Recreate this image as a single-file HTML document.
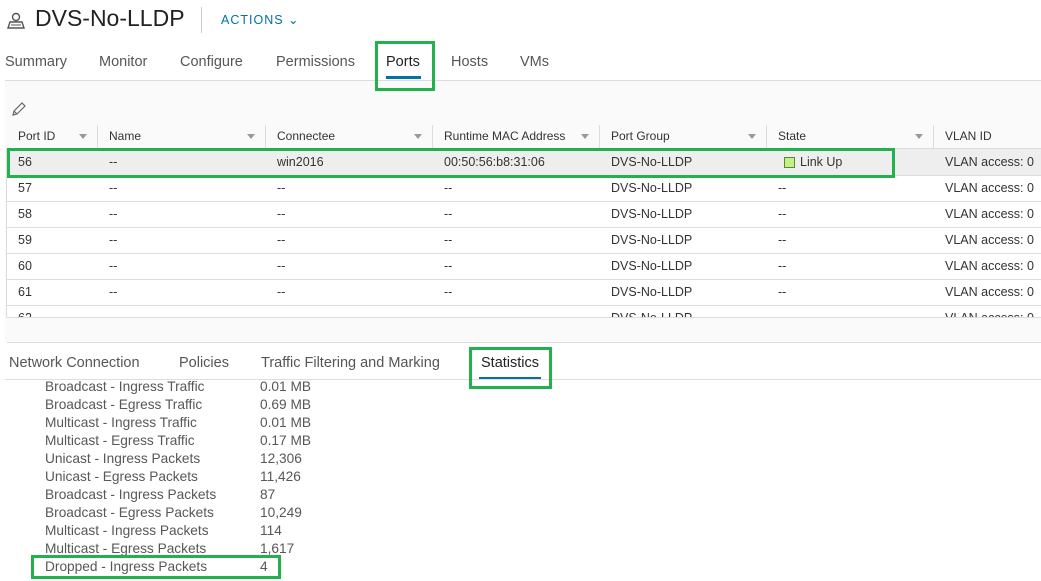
<!DOCTYPE html>
<html><head><style>
*{margin:0;padding:0;box-sizing:border-box}
body{width:1041px;height:581px;overflow:hidden;background:#fff;font-family:"Liberation Sans",sans-serif;position:relative;color:#333}
.a{position:absolute;white-space:nowrap}
.tab{font-size:14.5px;color:#565656;top:54px}
.hd{font-size:12px;color:#333;top:129px}
.cell{font-size:12.5px;color:#333}
.g{position:absolute;border:3px solid #22b14c}
.st{font-size:13.7px;color:#575757}
.fl{position:absolute;width:0;height:0;border-left:4px solid transparent;border-right:4px solid transparent;border-top:5px solid #999}
</style></head><body>
<svg class="a" style="left:6px;top:12px" width="20" height="18" viewBox="0 0 20 18"><circle cx="10" cy="5" r="3.5" fill="none" stroke="#555" stroke-width="1.4"/><path d="M2 16 L4 10 H16 L18 16 Z" fill="none" stroke="#555" stroke-width="1.4"/><path d="M5 13h10" stroke="#555"/></svg>
<div class="a" style="left:35px;top:5px;font-size:23px;color:#222">DVS-No-LLDP</div>
<div class="a" style="left:201px;top:7px;width:1px;height:26px;background:#ccc"></div>
<div class="a" style="left:221px;top:12px;font-size:12.5px;color:#0072a3;letter-spacing:1px">ACTIONS ⌄</div>
<div class="a tab" style="left:5px">Summary</div>
<div class="a tab" style="left:99px">Monitor</div>
<div class="a tab" style="left:180px">Configure</div>
<div class="a tab" style="left:276px">Permissions</div>
<div class="a tab" style="left:386px;color:#222">Ports</div>
<div class="a" style="left:386px;top:76px;width:35px;height:3px;background:#0072a3"></div>
<div class="a tab" style="left:451px">Hosts</div>
<div class="a tab" style="left:520px">VMs</div>
<div class="a" style="left:5px;top:80px;width:1036px;height:1px;background:#ddd"></div>
<div class="a" style="left:5px;top:81px;width:1036px;height:261px;background:#fafafa"></div>
<svg class="a" style="left:11px;top:101px" width="16" height="16" viewBox="0 0 16 16"><path d="M2 14 L3 10 L11 2 L14 5 L6 13 Z M3 10 L6 13" fill="none" stroke="#666" stroke-width="1.2"/></svg>
<div class="a" style="left:6px;top:124px;width:1035px;height:194px;background:#fff;border:1px solid #ddd;border-right:none"></div>
<div class="a" style="left:6px;top:124px;width:1035px;height:25px;background:#fafafa;border-bottom:1px solid #ddd"></div>
<div class="a" style="left:7px;top:149px;width:1034px;height:26px;background:#eee"></div>
<div id="t"></div>
<div class="a" style="left:7px;top:342px;width:1034px;height:1px;background:#ddd"></div>
<div class="a tab" style="left:9px;top:355px">Network Connection</div>
<div class="a tab" style="left:179px;top:355px">Policies</div>
<div class="a tab" style="left:261px;top:355px">Traffic Filtering and Marking</div>
<div class="a tab" style="left:481px;top:355px;color:#222">Statistics</div>
<div class="a" style="left:479px;top:377px;width:62px;height:2px;background:#0072a3"></div>
<div class="a" style="left:5px;top:379px;width:1036px;height:1px;background:#ddd"></div>
<div id="s"></div>
<div class="g" style="left:375px;top:41px;width:60px;height:50px"></div>
<div class="g" style="left:7px;top:148px;width:888px;height:30px"></div>
<div class="g" style="left:469px;top:347px;width:83px;height:42px"></div>
<div class="g" style="left:31px;top:555px;width:250px;height:24px"></div>
<script>
var cols=[6,97,265,432,599,766,933],names=["Port ID","Name","Connectee","Runtime MAC Address","Port Group","State","VLAN ID"],h="";
cols.forEach(function(x,i){h+='<div class="a hd" style="left:'+(x+12)+'px">'+names[i]+'</div>';if(i>0)h+='<div class="a" style="left:'+x+'px;top:125px;width:1px;height:23px;background:#ddd"></div>';if(i<6)h+='<div class="fl" style="left:'+(cols[i+1]-18)+'px;top:134px"></div>';});
var ids=[56,57,58,59,60,61,62];
ids.forEach(function(id,r){var y=149+r*26,ty=y+6;var c=r==0?["56","--","win2016","00:50:56:b8:31:06","DVS-No-LLDP","","VLAN access: 0"]:[id,"--","--","--","DVS-No-LLDP","--","VLAN access: 0"];
c.forEach(function(v,i){h+='<div class="a cell" style="left:'+(cols[i]+12)+'px;top:'+ty+'px">'+v+'</div>';});
if(r==0)h+='<div class="a" style="left:784px;top:157px;width:11px;height:11px;background:#c4f08c;border:1px solid #5a8a2a"></div><div class="a cell" style="left:800px;top:155px">Link Up</div>';
if(r<6)h+='<div class="a" style="left:7px;top:'+(y+26)+'px;width:1034px;height:1px;background:#ddd"></div>';});
h+='<div class="a" style="left:6px;top:317px;width:1035px;height:25px;background:#fafafa;border-top:1px solid #ddd"></div>';
document.getElementById("t").innerHTML=h;
var st=[["Broadcast - Ingress Traffic","0.01 MB"],["Broadcast - Egress Traffic","0.69 MB"],["Multicast - Ingress Traffic","0.01 MB"],["Multicast - Egress Traffic","0.17 MB"],["Unicast - Ingress Packets","12,306"],["Unicast - Egress Packets","11,426"],["Broadcast - Ingress Packets","87"],["Broadcast - Egress Packets","10,249"],["Multicast - Ingress Packets","114"],["Multicast - Egress Packets","1,617"],["Dropped - Ingress Packets","4"]],s="";
st.forEach(function(p,i){var y=379+i*18;s+='<div class="a st" style="left:45px;top:'+y+'px">'+p[0]+'</div><div class="a st" style="left:260px;top:'+y+'px">'+p[1]+'</div>';});
document.getElementById("s").innerHTML=s;
</script>
</body></html>
